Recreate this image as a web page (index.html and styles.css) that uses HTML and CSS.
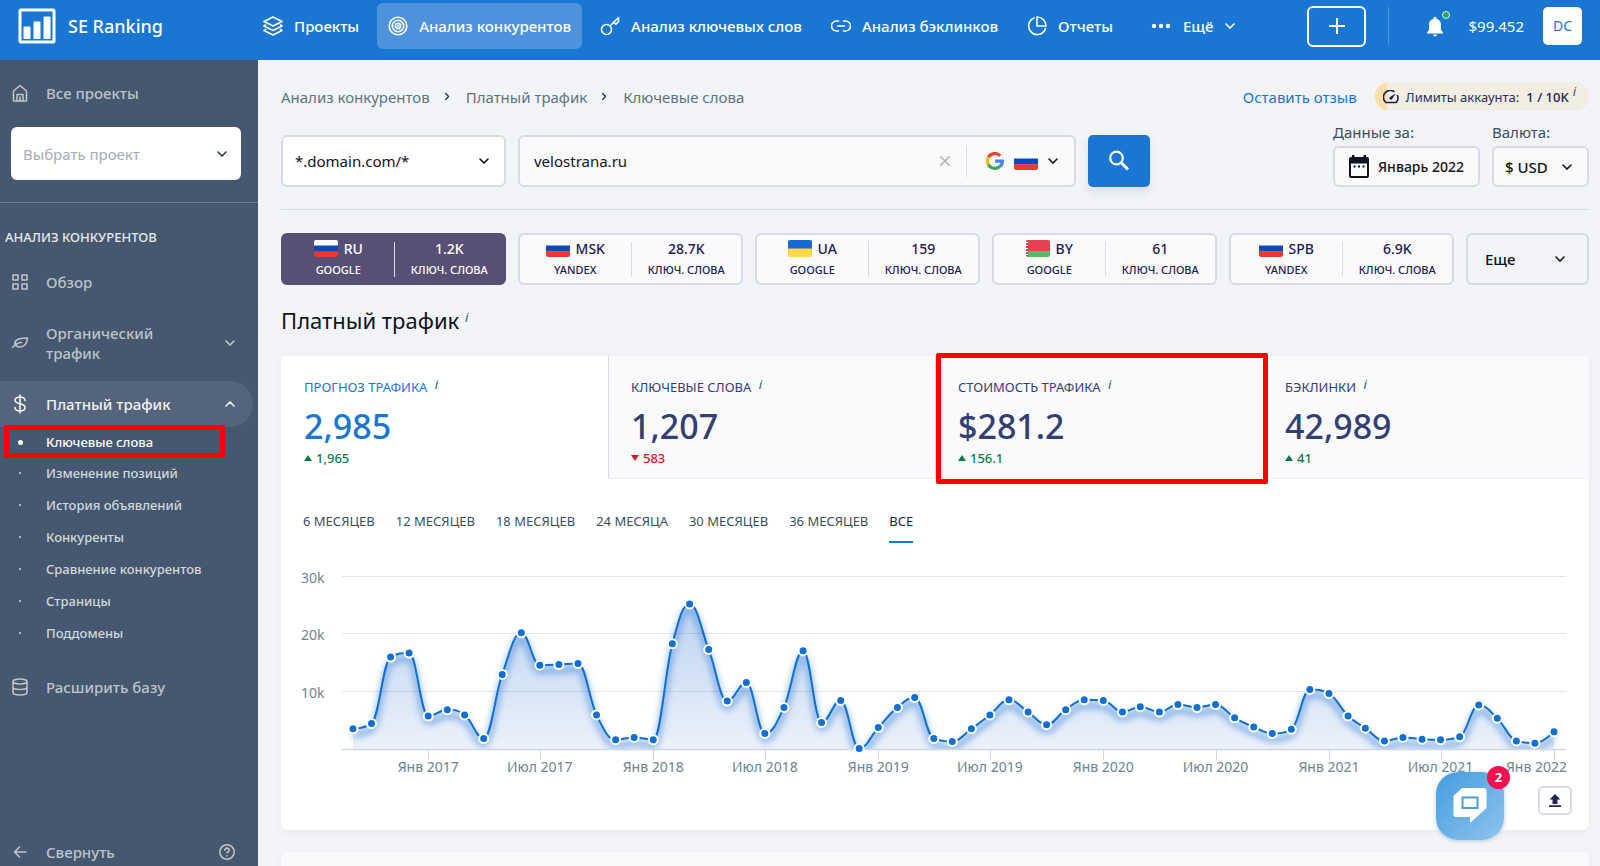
FILE: index.html
```html
<!DOCTYPE html>
<html lang="ru">
<head>
<meta charset="utf-8">
<meta name="viewport" content="width=device-width, initial-scale=1">
<title>SE Ranking</title>
<link rel="stylesheet" href="styles.css">
</head>
<body>
<svg class="sprite" aria-hidden="true">
  <symbol id="chev" viewBox="0 0 10 6"><path d="M1 1l4 4 4-4" fill="none" stroke="currentColor" stroke-width="1.6" stroke-linecap="round"/></symbol>
  <symbol id="flag-ru" viewBox="0 0 24 17"><path fill="#fff" d="M0 0h24v6H0z"/><path fill="#0b47bd" d="M0 5.500h24v6H0z"/><path fill="#e63a30" d="M0 11.200h24V17H0z"/></symbol>
  <symbol id="flag-ua" viewBox="0 0 24 17"><path fill="#176bd0" d="M0 0h24v9H0z"/><path fill="#ffd747" d="M0 8.500h24V17H0z"/></symbol>
  <symbol id="flag-by" viewBox="0 0 24 17"><path fill="#e54352" d="M0 0h24v11.500H0z"/><path fill="#57bb63" d="M2 11h22v6H2z"/><path fill="#fff" d="M0 0h2v17H0z"/><path d="M1 0v17" stroke="#d9304a" stroke-width="2" stroke-dasharray="2 1"/></symbol>
</svg>
<div class="app">
  <header class="topbar">
    <a class="logo" href="#">
      <svg width="38" height="36" viewBox="0 0 38 36"><rect x="2" y="2" width="34" height="32" rx="1" fill="none" stroke="#fff" stroke-width="3"/><path fill="#fff" d="M5.500 19.500q0-1 1-1h5q1 0 1 1V31h-7zM15.500 14.500q0-1 1-1h5q1 0 1 1V31h-7zM25.500 9.500q0-1 1-1h5q1 0 1 1V31h-7z"/></svg>
      <span>SE Ranking</span>
    </a>
    <nav class="mainnav">
      <a class="nav-link" href="#"><svg width="20" height="20" viewBox="0 0 20 20"><g class="line"><path d="M10 1L1 5.500l9 4.500 9-4.500z"/><path d="M2.500 9L1 10l9 4.500 9-4.500-1.500-1"/><path d="M2.500 13.500L1 14.500l9 4.500 9-4.500-1.500-1"/></g></svg>Проекты</a>
      <a class="nav-link active" href="#"><svg width="20" height="20" viewBox="0 0 20 20"><g class="line"><circle cx="10" cy="10" r="8.800"/><circle cx="10" cy="10" r="5.700"/><circle cx="10" cy="10" r="2.600"/></g><circle cx="10" cy="10" r="1" fill="#fff"/></svg>Анализ конкурентов</a>
      <a class="nav-link" href="#"><svg width="20" height="20" viewBox="0 0 20 20"><g class="line"><circle cx="6.500" cy="13.500" r="5"/><path d="M10 10l8.500-8.500v4.200l-2.600 2.600-2.400-2.300"/></g></svg>Анализ ключевых слов</a>
      <a class="nav-link" href="#"><svg width="20" height="20" viewBox="0 0 20 20"><g class="line"><path d="M7.500 5H5.500a5 5 0 0 0 0 10h2M12.500 5h2a5 5 0 0 1 0 10h-2M6.500 10h7"/></g></svg>Анализ бэклинков</a>
      <a class="nav-link" href="#"><svg width="20" height="20" viewBox="0 0 20 20"><g class="line"><path d="M7 2a8.600 8.600 0 1 0 11.500 10.500M10 1v9h9a9 9 0 0 0-9-9z"/></g></svg>Отчеты</a>
      <button class="nav-link more" type="button"><svg width="20" height="20" viewBox="0 0 20 20" fill="#fff"><circle cx="3" cy="10" r="2.200"/><circle cx="10" cy="10" r="2.200"/><circle cx="17" cy="10" r="2.200"/></svg>Ещё<svg class="chev" width="10" height="6"><use href="#chev"/></svg></button>
    </nav>
    <button class="add" type="button" aria-label="Добавить"><svg width="16" height="16" viewBox="0 0 16 16"><path d="M8 0v16M0 8h16" stroke="#fff" stroke-width="2"/></svg></button>
    <div class="account">
      <button class="bell" type="button" aria-label="Уведомления"><svg width="24" height="26" viewBox="0 0 24 26"><path fill="#fff" d="M7.500 7.300a1.500 1.500 0 0 1 3 0v.7c3.300.7 4.500 3.200 4.500 6v5l2 2.500v1H1v-1L3 19v-5c0-2.800 1.200-5.300 4.500-6zM7 23.500h4a2 2 0 0 1-4 0z"/><circle cx="20" cy="4" r="3.500" fill="#1fae5b" stroke="#d9f0e6" stroke-width="1"/></svg></button>
      <span class="balance">$99.452</span>
      <button class="avatar" type="button">DC</button>
    </div>
  </header>
  <div class="body">
    <aside class="sidebar">
      <a class="side-item all" href="#"><svg width="16" height="18" viewBox="0 0 16 18"><g class="line"><path d="M1.500 7L8 1.500 14.500 7v10h-13z"/><path d="M5 17v-6.500h6V17M8 13v4"/></g></svg><span>Все проекты</span></a>
      <div class="project">
        <select class="project-select" aria-label="Проект"><option>Выбрать проект</option></select>
        <svg class="chev" width="10" height="6"><use href="#chev"/></svg>
      </div>
      <div class="side-title">АНАЛИЗ КОНКУРЕНТОВ</div>
      <nav class="sidenav">
        <a class="side-item" href="#"><svg width="16" height="16" viewBox="0 0 16 16"><g class="line"><path d="M1 1h5v5H1zM10 1h5v5h-5zM1 10h5v5H1zM10 10h5v5h-5z"/></g></svg><span>Обзор</span></a>
        <button class="side-item tall" type="button"><svg width="18" height="14" viewBox="0 0 18 14"><g class="line"><path d="M1.500 11.500c3.500-4 5.500-5 9-5M4 9C3 4.500 6 2 16.500 2c-.5 5.500-2.500 8.500-7 9-3 .3-3.500-.8-4.500-1.500"/></g></svg><span>Органический трафик</span><svg class="chev" width="10" height="6"><use href="#chev"/></svg></button>
        <button class="side-item current" type="button"><svg width="12" height="20" viewBox="0 0 12 20"><path class="line" d="M11 6.500C11 4 9 3 6 3S1 4.200 1 6.300C1 11 11 8.500 11 13.500c0 2.300-2 3.500-5 3.500s-5-1.200-5-3.500M6 1v18"/></svg><span>Платный трафик</span><svg class="chev up" width="10" height="6"><use href="#chev"/></svg></button>
        <ul class="sub">
          <li class="on"><a href="#">Ключевые слова</a></li>
          <li><a href="#">Изменение позиций</a></li>
          <li><a href="#">История объявлений</a></li>
          <li><a href="#">Конкуренты</a></li>
          <li><a href="#">Сравнение конкурентов</a></li>
          <li><a href="#">Страницы</a></li>
          <li><a href="#">Поддомены</a></li>
        </ul>
        <a class="side-item" href="#"><svg width="16" height="18" viewBox="0 0 16 18"><g class="line"><ellipse cx="8" cy="3.500" rx="7" ry="2.500"/><path d="M1 3.500v11c0 3.300 14 3.300 14 0v-11M1 9c0 3.300 14 3.300 14 0"/></g></svg><span>Расширить базу</span></a>
      </nav>
      <div class="collapse">
        <button class="side-item" type="button"><svg width="14" height="12" viewBox="0 0 14 12"><path class="line" d="M6.500 1l-5 5 5 5M1.500 6H13"/></svg><span>Свернуть</span></button>
        <button class="help" type="button" aria-label="Помощь"><svg width="16" height="16" viewBox="0 0 16 16"><g class="line"><circle cx="8" cy="8" r="7.200"/><path d="M5.800 6.300c0-3 4.500-2.800 4.400 0 0 1.500-2.200 1.300-2.200 2.700M8 11.800v.1"/></g></svg></button>
      </div>
    </aside>
    <main class="main">
      <div class="crumbbar">
        <nav class="crumbs">
          <a href="#">Анализ конкурентов</a><svg class="chev right" width="8" height="5"><use href="#chev"/></svg>
          <a href="#">Платный трафик</a><svg class="chev right" width="8" height="5"><use href="#chev"/></svg>
          <span>Ключевые слова</span>
        </nav>
        <a class="feedback" href="#">Оставить отзыв</a>
        <div class="limits"><svg width="16" height="14" viewBox="0 0 16 14"><path d="M11.500 1.900A6.600 6.600 0 0 0 2.900 12.500h10.200A6.600 6.600 0 0 0 14.200 5" fill="none" stroke="#1c2050" stroke-width="1.600"/><path d="M12.500 3.500L9.200 9a1.500 1.500 0 1 1-2.200-2z" fill="#1c2050"/></svg><span>Лимиты аккаунта:</span><b>1 / 10K</b><i class="info">i</i></div>
      </div>
      <div class="searchbar">
        <div class="scope field">
          <select aria-label="Область поиска"><option>*.domain.com/*</option></select>
          <svg class="chev" width="10" height="6"><use href="#chev"/></svg>
        </div>
        <div class="query field">
          <input type="text" value="velostrana.ru" aria-label="Домен">
          <button class="clear" type="button" aria-label="Очистить"><svg width="10" height="10" viewBox="0 0 10 10"><path d="M0 0l10 10M10 0L0 10" stroke="#a9adbb" stroke-width="1.400"/></svg></button>
          <button class="engine" type="button" aria-label="Поисковая система">
            <svg width="18" height="18" viewBox="0 0 18 18" fill="none" stroke-width="3.200"><path stroke="#ea4335" d="M2.300 5.300A7.500 7.500 0 0 1 14.200 3.800"/><path stroke="#fbbc05" d="M2.400 12.500a7.400 7.400 0 0 1 0-7.300"/><path stroke="#34a853" d="M2.300 12.500a7.500 7.500 0 0 0 11.500 2"/><path stroke="#4285f4" d="M9 9.200h7.400c0 2-.9 4-2.600 5.300"/></svg>
            <svg class="flag" width="24" height="17"><use href="#flag-ru"/></svg>
            <svg class="chev" width="10" height="6"><use href="#chev"/></svg>
          </button>
        </div>
        <button class="go" type="submit" aria-label="Найти"><svg width="22" height="22" viewBox="0 0 22 22" fill="none" stroke="#fff"><circle cx="8.500" cy="8" r="6.300" stroke-width="2.200"/><path d="M13 12.500l7 7" stroke-width="3"/></svg></button>
        <div class="filters">
          <div class="filter">
            <label for="month">Данные за:</label>
            <button class="field date" id="month" type="button"><svg width="20" height="24" viewBox="0 0 20 24"><path fill="#10131c" d="M3 0h2.500v2h9V0H17v2h1.500Q20 2 20 4v17q0 2-2 2H2q-2 0-2-2V4q0-2 2-2h1zM2 8.500V21h16V8.500z"/><path fill="#10131c" d="M4.500 10.500h2v2h-2zM9 10.500h2v2H9zM13.500 10.500h2v2h-2z"/></svg>Январь 2022</button>
          </div>
          <div class="filter">
            <label for="currency">Валюта:</label>
            <div class="field currency"><select id="currency"><option>$ USD</option></select><svg class="chev" width="10" height="6"><use href="#chev"/></svg></div>
          </div>
        </div>
      </div>
      <div class="regions">
        <button class="region on" type="button"><span class="half"><span class="code"><svg class="flag" width="24" height="17"><use href="#flag-ru"/></svg>RU</span><small>GOOGLE</small></span><span class="half"><span class="code">1.2K</span><small>КЛЮЧ. СЛОВА</small></span></button>
        <button class="region" type="button"><span class="half"><span class="code"><svg class="flag" width="24" height="17"><use href="#flag-ru"/></svg>MSK</span><small>YANDEX</small></span><span class="half"><span class="code">28.7K</span><small>КЛЮЧ. СЛОВА</small></span></button>
        <button class="region" type="button"><span class="half"><span class="code"><svg class="flag" width="24" height="17"><use href="#flag-ua"/></svg>UA</span><small>GOOGLE</small></span><span class="half"><span class="code">159</span><small>КЛЮЧ. СЛОВА</small></span></button>
        <button class="region" type="button"><span class="half"><span class="code"><svg class="flag" width="24" height="17"><use href="#flag-by"/></svg>BY</span><small>GOOGLE</small></span><span class="half"><span class="code">61</span><small>КЛЮЧ. СЛОВА</small></span></button>
        <button class="region" type="button"><span class="half"><span class="code"><svg class="flag" width="24" height="17"><use href="#flag-ru"/></svg>SPB</span><small>YANDEX</small></span><span class="half"><span class="code">6.9K</span><small>КЛЮЧ. СЛОВА</small></span></button>
        <button class="region-more" type="button">Еще<svg class="chev" width="10" height="6"><use href="#chev"/></svg></button>
      </div>
      <h1>Платный трафик <i class="info">i</i></h1>
      <section class="card">
        <div class="stats">
          <button class="stat on" type="button"><span class="label">ПРОГНОЗ ТРАФИКА <i class="info">i</i></span><span class="value">2,985</span><span class="delta up">1,965</span></button>
          <button class="stat" type="button"><span class="label">КЛЮЧЕВЫЕ СЛОВА <i class="info">i</i></span><span class="value">1,207</span><span class="delta down">583</span></button>
          <button class="stat marked" type="button"><span class="label">СТОИМОСТЬ ТРАФИКА <i class="info">i</i></span><span class="value">$281.2</span><span class="delta up">156.1</span></button>
          <button class="stat" type="button"><span class="label">БЭКЛИНКИ <i class="info">i</i></span><span class="value">42,989</span><span class="delta up">41</span></button>
        </div>
        <div class="periods">
          <button type="button">6 МЕСЯЦЕВ</button><button type="button">12 МЕСЯЦЕВ</button><button type="button">18 МЕСЯЦЕВ</button><button type="button">24 МЕСЯЦА</button><button type="button">30 МЕСЯЦЕВ</button><button type="button">36 МЕСЯЦЕВ</button><button class="on" type="button">ВСЕ</button>
        </div>
        <div class="chart" id="chart"></div>
        <div class="card-foot"><button class="export" type="button" aria-label="Экспорт"><svg width="12" height="13" viewBox="0 0 12 13" fill="#232653"><path d="M6 0l5.500 5.500H8.500V10h-5V5.500H.5zM0 11.300h12V13H0z"/></svg></button></div>
      </section>
      <section class="card next"></section>
    </main>
  </div>
  <button class="chat" type="button" aria-label="Чат">
    <svg width="34" height="36" viewBox="0 0 34 36"><path fill="#fff" d="M9 0h22q2.500 0 2.500 2.500V20L17 35v-6H3q-2.500 0-2.500-2.500V8z"/><path fill="none" stroke="#4d9ed8" stroke-width="2" d="M9.500 9.500h15v10.500h-15z"/></svg>
    <span class="badge">2</span>
  </button>
</div>
<script src="chart.js"></script>
</body>
</html>
```

FILE: styles.css
```css
*, *::before, *::after { box-sizing: border-box; }
body {
  margin: 0;
  font: 15px/20px "Noto Sans", "Open Sans", sans-serif;
  color: #10131c;
  background: #f3f4f8;
}
a { color: inherit; text-decoration: none; }
button, select, input {
  font: inherit;
  color: inherit;
  background: none;
  border: 0;
  padding: 0;
  margin: 0;
  appearance: none;
  outline: none;
}
button { cursor: pointer; }
svg { display: block; flex: none; }
.sprite { position: absolute; width: 0; height: 0; }
.line { fill: none; stroke: currentColor; stroke-width: 1.6; stroke-linejoin: round; stroke-linecap: round; }
.chev.right { transform: rotate(-90deg); }
.chev.up { transform: rotate(180deg); }
.app { height: 100vh; display: flex; flex-direction: column; }
.body { flex: 1; display: flex; min-height: 0; }

/* Top bar */
.topbar {
  height: 60px;
  flex: none;
  display: flex;
  align-items: center;
  padding: 0 18px 8px;
  background: #1976d2;
  color: #fff;
}
.logo { display: flex; align-items: center; gap: 12px; width: 234px; font-size: 18px; font-weight: 500; }
.mainnav { display: flex; align-items: center; font-weight: 500; }
.nav-link { display: flex; align-items: center; gap: 11px; height: 46px; padding: 0 11px; margin-right: 7px; border-radius: 6px; white-space: nowrap; }
.nav-link.active { background: #4f92dc; }
.more { gap: 12px; margin: 0 0 0 9px; }
.add {
  width: 59px;
  height: 41px;
  margin-left: auto;
  border: 2px solid #fff;
  border-radius: 6px;
  display: flex;
  align-items: center;
  justify-content: center;
}
.account { display: flex; align-items: center; height: 38px; margin-left: 22px; border-left: 1px solid #4f92dc; }
.bell { margin-left: 37px; padding-bottom: 4px; }
.balance { margin: 0 19px 0 18px; }
.avatar { width: 39px; height: 38px; border-radius: 5px; background: #fff; color: #1976d2; font-size: 14px; }

/* Sidebar */
.sidebar { width: 258px; flex: none; background: #46586f; color: #bcc3cd; display: flex; flex-direction: column; padding-top: 21px; }
.side-item { display: grid; grid-template-columns: 40px 124px 1fr; align-items: center; column-gap: 6px; width: 253px; min-height: 24px; text-align: left; font-weight: 500; }
.side-item > svg:first-child { justify-self: center; }
.side-item > span { white-space: nowrap; }
.side-item .chev { margin-left: 49px; }
.project { position: relative; margin: 22px 17px 22px 11px; }
.project-select { width: 100%; height: 53px; padding: 0 12px; border-radius: 6px; background: #fff; color: #a6abb8; }
.project .chev { position: absolute; right: 14px; top: 24px; color: #2b3d4f; }
.side-title { border-top: 1px solid #6a7a92; padding: 24px 5px 0; color: #e6e9ee; font-size: 13px; font-weight: 500; }
.sidenav { padding-top: 23px; }
.side-item.tall { margin: 29px 0 18px; }
.side-item.tall > span { white-space: normal; }
.side-item.current { height: 46px; border-radius: 0 23px 23px 0; background: #54647c; color: #f0f2f5; }
.sub { list-style: none; margin: 0 0 26px; padding: 0; font-size: 13px; font-weight: 500; color: #d2d7de; }
.sub li { position: relative; display: flex; align-items: center; height: 32px; padding-left: 46px; }
.sub li::before { content: ""; position: absolute; left: 19px; width: 2px; height: 2px; background: #aab3c0; }
.sub li.on { height: 30px; color: #fff; }
.sub li.on::before { left: 18px; width: 5px; height: 5px; border-radius: 50%; background: #fff; }
.sub li.on::after { content: ""; position: absolute; left: 4px; top: -2px; width: 221px; height: 33px; border: 5px solid #f00; border-radius: 2px; }
.collapse { display: flex; align-items: center; margin-top: auto; padding-bottom: 2px; }
.collapse .side-item { flex: 1; }
.help { margin-right: 23px; }

/* Content */
.main { flex: 1; min-width: 0; overflow: hidden; padding: 22px 11px 0 23px; }
.crumbbar { display: flex; align-items: center; height: 29px; color: #5d7480; }
.crumbs { display: flex; align-items: center; gap: 15px; }
.crumbs .chev { color: #2a2d5c; margin-left: -2px; }
.feedback { margin-left: auto; color: #1976d2; }
.limits {
  display: flex;
  align-items: center;
  gap: 7px;
  height: 29px;
  margin-left: 18px;
  padding: 0 13px 0 8px;
  border-radius: 15px;
  font-size: 13px;
  color: #2b2e5e;
  background: linear-gradient(90deg, #fbdfa9 12px, #f3eee3 12px);
}
.limits b { font-weight: 500; color: #1c2050; }
.info { font-size: 13px; color: #2f5a6b; vertical-align: 3px; padding-left: 4px; line-height: 1; }
.limits .info { align-self: flex-start; line-height: 18px; padding: 0; margin-left: -3px; }
.searchbar { display: flex; align-items: flex-end; gap: 12px; padding: 11px 0 22px; border-bottom: 1px solid #d8dae6; }
.field { position: relative; border: 2px solid #d8dae6; border-radius: 6px; background: #fafafd; }
.field select { width: 100%; padding: 0 12px; height: 100%; }
.field > .chev { position: absolute; right: 15px; top: 50%; margin-top: -3px; }
.scope { width: 225px; height: 52px; background: #fff; }
.query { width: 558px; height: 52px; display: flex; align-items: center; }
.query input { flex: 1; min-width: 0; padding: 0 14px; height: 100%; }
.clear { padding: 0 16px; }
.engine { display: flex; align-items: center; gap: 10px; height: 32px; padding: 0 16px 0 19px; border-left: 1px solid #d8dae6; }
.flag { border-radius: 2px; }
.go { width: 62px; height: 52px; border-radius: 5px; background: #1976d2; display: flex; align-items: center; justify-content: center; box-shadow: 0 5px 8px #dcdfe8; }
.filters { display: flex; gap: 12px; margin-left: auto; }
.filter { display: flex; flex-direction: column; gap: 4px; color: #37505c; }
.filter .field { height: 41px; color: #10131c; font-weight: 500; }
.date { width: 147px; display: flex; align-items: center; justify-content: center; gap: 9px; font-size: 14px; }
.currency { width: 97px; }
.currency select { padding: 0 11px; }

.regions { display: grid; grid-template-columns: repeat(5, 225fr) 123fr; gap: 12px; padding-top: 23px; }
.region, .region-more { height: 52px; border: 2px solid #d8dae6; border-radius: 6px; background: #fafafd; color: #1c2050; }
.region { display: grid; grid-template-columns: 1fr 1fr; align-items: center; }
.region.on { background: #584f75; border-color: #584f75; color: #fff; }
.half { display: flex; flex-direction: column; align-items: center; justify-content: center; height: 35px; gap: 5px; }
.half + .half { border-left: 1px solid #d8dae6; }
.code { display: flex; align-items: center; gap: 6px; line-height: 17px; font-size: 14px; font-weight: 500; }
.half small { font-size: 11px; line-height: 16px; font-weight: 500; }
.region-more { display: flex; align-items: center; justify-content: space-between; padding: 0 22px 0 17px; background: none; color: #10131c; font-weight: 500; }

h1 { margin: 0; padding: 19px 0 20px; font-size: 22px; line-height: 32px; font-weight: 400; }
h1 .info { vertical-align: 7px; padding: 0; }
.card { background: #fff; border-radius: 0 0 6px 6px; box-shadow: 0 2px 6px #e8eaf0; }
.card.next { margin-top: 22px; height: 120px; border-radius: 6px; background: #fafafd; }
.stats { display: grid; grid-template-columns: repeat(4, 1fr); }
.stat { position: relative; display: flex; flex-direction: column; align-items: flex-start; padding: 21px 22px 9px; height: 123px; background: #fafafd; border-bottom: 1px solid #f0f1f6; border-left: 1px solid #d8dae6; color: #333f72; }
.stat.on { background: #fff; color: #1976d2; border-color: #fff; }
.stat:last-child { border-left-color: #fafafd; }
.stat.marked::after { content: ""; position: absolute; left: 0; right: -6px; top: -3px; bottom: -6px; border: 5px solid #f00; border-radius: 2px; z-index: 1; }
.label { font-size: 13px; line-height: 20px; }
.value { font-size: 34px; line-height: 40px; padding-top: 9px; font-weight: 500; }
.delta { display: flex; align-items: center; gap: 4px; font-size: 13px; line-height: 20px; font-weight: 500; color: #0d7a45; padding-top: 2px; }
.delta::before { content: ""; border: 4px solid transparent; border-top: 0; border-bottom: 6px solid; }
.delta.down { color: #e0141e; }
.delta.down::before { border-bottom: 0; border-top: 6px solid; }
.periods { display: flex; gap: 21px; padding: 32px 22px 0; font-size: 13px; color: #37505c; }
.periods button { height: 32px; padding-bottom: 10px; border-bottom: 2px solid transparent; }
.periods .on { color: #1c2050; border-color: #1976d2; }
.chart { height: 243px; }
.chart svg { overflow: visible; }
.chart text { font-size: 14px; fill: #6c8490; }
.card-foot { display: flex; justify-content: flex-end; padding: 0 17px 15px; }
.export { width: 34px; height: 29px; border: 2px solid #d8dae6; border-radius: 5px; display: flex; align-items: center; justify-content: center; }

.chat {
  position: fixed;
  right: 96px;
  bottom: 26px;
  width: 68px;
  height: 68px;
  border-radius: 22px;
  background: linear-gradient(135deg, #459ddf, #8ec4ee);
  box-shadow: 0 1px 4px #b5c6d8;
  display: flex;
  align-items: center;
  justify-content: center;
}
.badge {
  position: absolute;
  right: -6px;
  top: -6px;
  width: 23px;
  height: 23px;
  border-radius: 50%;
  background: #f0124f;
  color: #fff;
  font-size: 13px;
  line-height: 23px;
  font-weight: 700;
}
```

FILE: chart.js
```js
// Monthly traffic in thousands, September 2016 through January 2022
const traffic = [
  3.5, 4.4, 15.9, 16.6,
  5.7, 6.8, 5.9, 1.8, 12.9, 20.1, 14.5, 14.6, 14.8, 5.9, 1.6, 2.0,
  1.6, 18.2, 25.1, 17.2, 8.3, 11.5, 2.7, 7.2, 17.0, 4.6, 8.4, 0.1,
  3.7, 7.2, 8.9, 1.8, 1.3, 3.5, 5.9, 8.5, 6.4, 4.2, 6.8, 8.5,
  8.4, 6.4, 7.3, 6.4, 7.7, 7.2, 7.7, 5.4, 3.8, 2.7, 3.4, 10.3,
  9.6, 5.7, 3.6, 1.4, 2.0, 1.7, 1.6, 2.1, 7.6, 5.3, 1.4, 1.0,
  3.0
];

// Cubic spline that never overshoots its neighbours
function spline(p) {
  let d = `M${p[0].x} ${p[0].y}`;
  let rx = p[0].x, ry = p[0].y;
  for (let i = 1; i < p.length; i++) {
    const a = p[i - 1], c = p[i], n = p[i + 1];
    let lx = c.x, ly = c.y, nx = c.x, ny = c.y;
    if (n) {
      lx = (1.5 * c.x + a.x) / 2.5;
      ly = (1.5 * c.y + a.y) / 2.5;
      nx = (1.5 * c.x + n.x) / 2.5;
      ny = (1.5 * c.y + n.y) / 2.5;
      const k = (ny - ly) * (nx - c.x) / (nx - lx) + c.y - ny;
      ly += k;
      ny += k;
      if (ly > a.y && ly > c.y) { ly = Math.max(a.y, c.y); ny = 2 * c.y - ly; }
      else if (ly < a.y && ly < c.y) { ly = Math.min(a.y, c.y); ny = 2 * c.y - ly; }
      if (ny > n.y && ny > c.y) { ny = Math.max(n.y, c.y); ly = 2 * c.y - ny; }
      else if (ny < n.y && ny < c.y) { ny = Math.min(n.y, c.y); ly = 2 * c.y - ny; }
    }
    d += `C${rx} ${ry} ${lx} ${ly} ${c.x} ${c.y}`;
    rx = nx;
    ry = ny;
  }
  return d;
}

function draw() {
  const host = document.getElementById('chart');
  const w = host.clientWidth, left = 61, right = w - 23, base = 206, unit = 5.78;
  const start = Date.UTC(2016, 8, 1), end = Date.UTC(2022, 0, 1);
  const x0 = left + 11, x1 = right - 12;
  const pts = traffic.map((v, i) => ({
    x: x0 + (Date.UTC(2016, 8 + i, 1) - start) / (end - start) * (x1 - x0),
    y: base - v * unit
  }));
  const line = spline(pts);
  const last = pts[pts.length - 1];
  let s = `<svg width="${w}" height="243"><defs>
    <linearGradient id="fill" gradientUnits="userSpaceOnUse" x1="0" y1="60" x2="0" y2="${base}"><stop offset="0" stop-color="#aecbee"/><stop offset="1" stop-color="#e9effa"/></linearGradient>
    <filter id="soft" x="-5%" y="-20%" width="110%" height="150%"><feGaussianBlur stdDeviation="3"/></filter>
    <clipPath id="plot"><rect x="${left}" y="0" width="${right - left}" height="${base}"/></clipPath></defs>`;
  for (const v of [10, 20, 30]) {
    const y = Math.round(base - v * unit) + 0.5;
    s += `<text x="20" y="${y + 6}">${v}k</text>`;
  }
  s += `<path d="${line}L${last.x} ${base}L${pts[0].x} ${base}Z" fill="url(#fill)" fill-opacity=".85"/>`;
  for (const v of [10, 20, 30]) {
    const y = Math.round(base - v * unit) + 0.5;
    s += `<path d="M${left} ${y}H${right}" stroke="#28344d" stroke-opacity=".12"/>`;
  }
  s += `<g clip-path="url(#plot)"><path d="${line}" transform="translate(0 6)" fill="none" stroke="#2f7ad8" stroke-opacity=".5" stroke-width="6" filter="url(#soft)"/></g>`;
  s += `<path d="M${left} ${base + 0.5}H${right}" stroke="#ccd6eb" stroke-width="1.5"/>`;
  s += `<path d="${line}" fill="none" stroke="#0f70d2" stroke-width="2"/>`;
  for (const p of pts) s += `<circle cx="${p.x}" cy="${p.y}" r="4.500" fill="#0f70d2" stroke="#fff" stroke-width="2"/>`;
  for (let i = 4; i < pts.length; i += 6) {
    const d = new Date(Date.UTC(2016, 8 + i, 1));
    const name = (d.getUTCMonth() ? 'Июл ' : 'Янв ') + d.getUTCFullYear();
    const end = i === pts.length - 1;
    s += `<path d="M${Math.round(pts[i].x) + 0.5} ${base}v11" stroke="#ccd6eb"/>`;
    s += `<text x="${end ? w - 22 : pts[i].x}" y="${base + 23}" text-anchor="${end ? 'end' : 'middle'}">${name}</text>`;
  }
  host.innerHTML = s + '</svg>';
}

draw();
addEventListener('resize', draw);
```
